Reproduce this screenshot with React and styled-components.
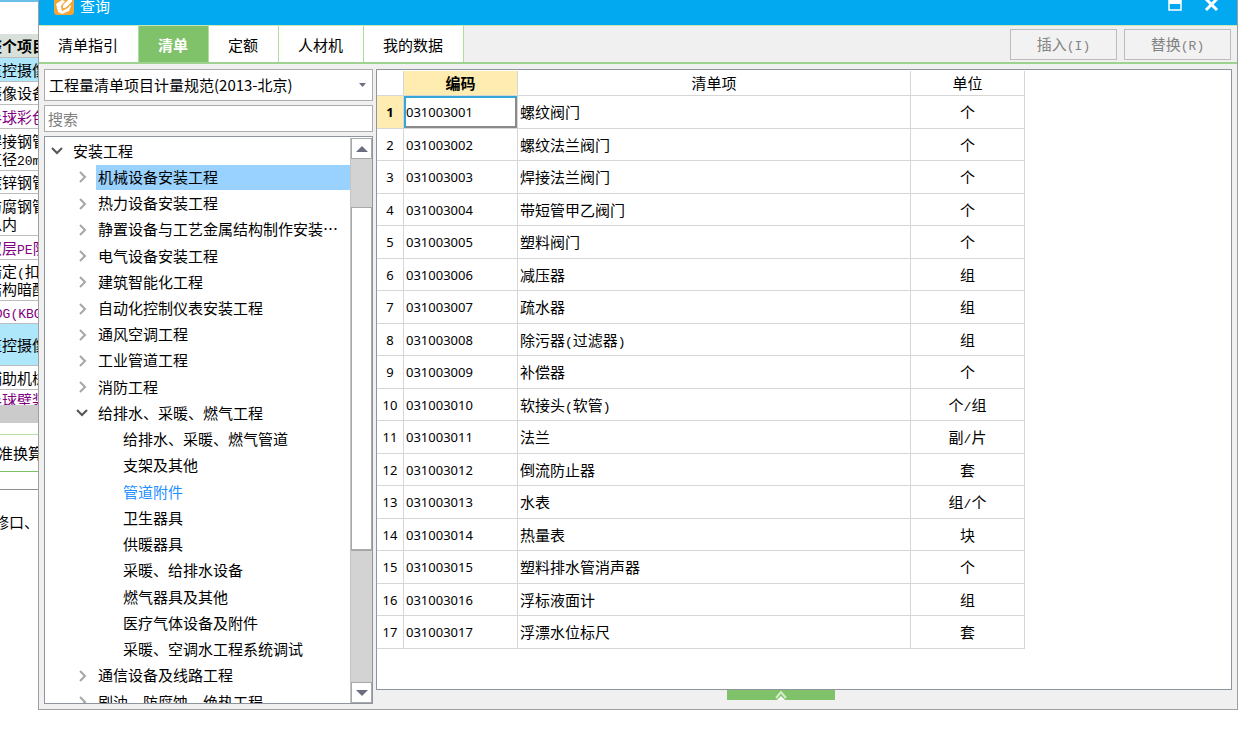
import React, { useState } from 'react'
import styled, { createGlobalStyle, css } from 'styled-components'

const GlobalStyle = createGlobalStyle`
  * {
    box-sizing: border-box;
  }

  body {
    margin: 0;
    background: white;
    color: black;
    overflow: hidden;
  }

  body, button, input, select {
    font-family: 'Noto Sans CJK SC', 'Noto Sans', sans-serif;
    font-size: 15px;
    line-height: 18px;
  }
`

const Desktop = styled.div`
  display: flex;
  height: 100vh;
  padding-bottom: 39px;
`

/* sheet that is mostly covered by the dialog */
const Behind = styled.aside`
  flex: 0 0 38px;
  overflow: hidden;
  white-space: nowrap;
`

const Sheet = styled.div`
  margin-left: -13px;
  padding-top: 32px;
  border-top: 2px solid #6bbfe8;
`

const SheetRow = styled.div`
  display: flex;
  flex-direction: column;
  justify-content: center;
  height: ${({ $height }) => $height}px;
  border-bottom: 1px solid #bdbdbd;
  background: ${({ $active }) => ($active ? '#aee6fa' : 'white')};
  color: ${({ $purple }) => ($purple ? '#800080' : 'black')};
  ${({ $head }) => $head && css`
    background: #d9e0da;
    font-weight: 700;
  `}
  ${({ $cut }) => $cut && css`
    justify-content: flex-start;
    padding-top: 1px;
    border-bottom: none;
    overflow: hidden;
  `}
`

const Line = styled.span`
  display: block;
  height: 18px;
`

/* half-width characters next to the 15px ideographs */
const Half = styled.span`
  font-family: 'Liberation Mono', monospace;
  font-size: 13px;
  line-height: 1;
`

const SheetScroll = styled.div`
  height: 18px;
  background: #cbcbcb;
`

const SubTab = styled.div`
  margin: 11px 0 0;
  margin-left: -4px;
  padding: 9px 0;
  border-top: 1px solid #b5dfa8;
  border-bottom: 1px solid #7cc268;
`

const SubText = styled.div`
  margin-top: 17px;
  padding: 23px 0 0 7px;
  border-top: 1px solid #909090;
`

const Dialog = styled.main`
  flex: 1;
  min-width: 0;
  display: flex;
  flex-direction: column;
  background: #f0f0f0;
  border: 1px solid #a0a0a0;
  border-top: none;
`

const TitleBar = styled.header`
  display: flex;
  align-items: center;
  flex: 0 0 38px;
  margin-top: -13px;
  padding: 0 17px 0 15px;
  background: #02a9f1;
  color: white;
`

const Title = styled.h1`
  flex: 1;
  margin: 0 0 0 6px;
  font-size: 15px;
  font-weight: 400;
`

const WindowButton = styled.button`
  display: flex;
  margin-left: 22px;
  padding: 0;
  border: none;
  background: none;
`

const Toolbar = styled.div`
  display: flex;
  align-items: center;
  justify-content: space-between;
  height: 39px;
  padding-right: 6px;
  border-top: 1px solid #c5eab8;
  border-bottom: 2px solid #9dd28f;
`

const Tabs = styled.nav`
  display: flex;
  align-self: stretch;
`

const Tab = styled.button`
  padding: 2px 21px 0 19px;
  border: none;
  box-shadow: inset -1px 0 #a9e09a;
  background: ${({ $active }) => ($active ? '#80c269' : 'white')};
  color: ${({ $active }) => ($active ? 'white' : 'black')};
  font-weight: ${({ $active }) => ($active ? 700 : 400)};
`

const Actions = styled.div`
  display: flex;
  gap: 7px;
`

const ActionButton = styled.button`
  width: 107px;
  height: 31px;
  border: 1px solid #bcbcbc;
  background: #f2f2f2;
  color: #838383;
`

const Body = styled.div`
  flex: 1;
  min-height: 0;
  display: flex;
  gap: 3px;
  padding: 5px;
`

const Side = styled.section`
  flex: 0 0 329px;
  display: flex;
  flex-direction: column;
  gap: 4px;
`

const SelectWrap = styled.div`
  position: relative;

  svg {
    position: absolute;
    right: 7px;
    top: 14px;
    pointer-events: none;
  }
`

const Select = styled.select`
  display: block;
  appearance: none;
  width: 100%;
  height: 32px;
  padding: 0 20px 0 4px;
  border: 1px solid #acacac;
  border-radius: 0;
  background: white;
  color: black;
`

const Search = styled.input`
  height: 27px;
  padding: 0 3px;
  border: 1px solid #acacac;
  background: white;

  &::placeholder {
    color: #808080;
  }
`

const TreeBox = styled.div`
  flex: 1;
  min-height: 0;
  display: flex;
  padding-top: 1px;
  border: 1px solid #8e959f;
  background: white;
`

const TreeClip = styled.div`
  flex: 1;
  overflow: hidden;
`

const Tree = styled.ul`
  display: flex;
  flex-direction: column;
  height: calc(100% + 12px);
  margin: 0;
  padding: 0;
  list-style: none;
`

const indent = [5, 30, 76]

const TreeRow = styled.li`
  flex: 1;
  display: flex;
  align-items: center;
  padding-left: ${({ $level }) => indent[$level]}px;
  white-space: nowrap;
`

const TreeLabel = styled.span`
  flex: 1;
  margin-left: ${({ $level }) => ($level === 1 ? 7 : 0)}px;
  padding: 3px 0 4px;
  padding-left: ${({ $level }) => [9, 2, 2][$level]}px;
  background: ${({ $selected }) => ($selected ? '#99d1ff' : 'none')};
  color: ${({ $current }) => ($current ? '#1e90ff' : 'inherit')};
`

const Chevron = styled.svg`
  flex: none;
  fill: none;
  stroke: ${({ $open }) => ($open ? '#555' : '#a6a6a6')};
  stroke-width: 2;
`

const ScrollBar = styled.div`
  flex: 0 0 22px;
  display: flex;
  flex-direction: column;
  background: #d3d3d3;
  border-left: 1px solid #c4c4c4;
`

const ScrollButton = styled.button`
  flex: 0 0 21px;
  display: flex;
  align-items: center;
  justify-content: center;
  padding: 0;
  border: 1px solid #a8a8a8;
  background: white;
`

const Track = styled.div`
  flex: ${({ $size }) => $size};
`

const Thumb = styled(Track)`
  border: 1px solid #a8a8a8;
  border-bottom-width: 2px;
  background: white;
`

const Content = styled.section`
  flex: 1;
  min-width: 0;
  display: flex;
  flex-direction: column;
  padding-bottom: 4px;
`

const GridBox = styled.div`
  flex: 1;
  min-height: 0;
  padding-top: 1px;
  border: 1px solid #8e959f;
  background: white;
  overflow: hidden;
`

const Grid = styled.table`
  table-layout: fixed;
  width: 648px;
  border-collapse: separate;
  border-spacing: 0;

  th, td {
    padding: 0 0 0 2px;
    border-right: 1px solid #d6d6d6;
    border-bottom: 1px solid #d6d6d6;
    font-weight: 400;
    text-align: left;
  }

  thead th {
    height: 25px;
    padding: 0;
    text-align: center;
  }

  tbody tr {
    height: 33px;
  }

  tbody tr:nth-child(even) {
    height: 32px;
  }

  thead th.picked, tbody th.picked {
    background: #ffecb0;
    font-weight: 700;
  }
`

const digits = css`
  && {
    font-family: 'Noto Sans', sans-serif;
    font-size: 13px;
  }
`

const RowNumber = styled.th`
  ${digits}
  && {
    padding: 0;
    text-align: center;
  }
`

const Code = styled.td`
  ${digits}
  ${({ $picked }) => $picked && css`
    box-shadow: inset 2px 2px #35a6d8, inset -2px -2px #8a8a8a;
  `}
`

const Unit = styled.td`
  && {
    padding: 0;
    text-align: center;
  }
`

const Handle = styled.button`
  display: flex;
  justify-content: center;
  width: 108px;
  height: 10px;
  margin-left: 41%;
  padding: 0;
  border: none;
  background: #80c269;
`

const tabs = ['清单指引', '清单', '定额', '人材机', '我的数据']

const tree = [
  { text: '安装工程', level: 0, open: true },
  { text: '机械设备安装工程', level: 1, selected: true },
  { text: '热力设备安装工程', level: 1 },
  { text: '静置设备与工艺金属结构制作安装…', level: 1 },
  { text: '电气设备安装工程', level: 1 },
  { text: '建筑智能化工程', level: 1 },
  { text: '自动化控制仪表安装工程', level: 1 },
  { text: '通风空调工程', level: 1 },
  { text: '工业管道工程', level: 1 },
  { text: '消防工程', level: 1 },
  { text: '给排水、采暖、燃气工程', level: 1, open: true },
  { text: '给排水、采暖、燃气管道', level: 2 },
  { text: '支架及其他', level: 2 },
  { text: '管道附件', level: 2, current: true },
  { text: '卫生器具', level: 2 },
  { text: '供暖器具', level: 2 },
  { text: '采暖、给排水设备', level: 2 },
  { text: '燃气器具及其他', level: 2 },
  { text: '医疗气体设备及附件', level: 2 },
  { text: '采暖、空调水工程系统调试', level: 2 },
  { text: '通信设备及线路工程', level: 1 },
  { text: '刷油、防腐蚀、绝热工程', level: 1 }
]

const items = [
  ['031003001', '螺纹阀门', '个'],
  ['031003002', '螺纹法兰阀门', '个'],
  ['031003003', '焊接法兰阀门', '个'],
  ['031003004', '带短管甲乙阀门', '个'],
  ['031003005', '塑料阀门', '个'],
  ['031003006', '减压器', '组'],
  ['031003007', '疏水器', '组'],
  ['031003008', '除污器(过滤器)', '组'],
  ['031003009', '补偿器', '个'],
  ['031003010', '软接头(软管)', '个/组'],
  ['031003011', '法兰', '副/片'],
  ['031003012', '倒流防止器', '套'],
  ['031003013', '水表', '组/个'],
  ['031003014', '热量表', '块'],
  ['031003015', '塑料排水管消声器', '个'],
  ['031003016', '浮标液面计', '组'],
  ['031003017', '浮漂水位标尺', '套']
]

const sheetRows = [
  { lines: ['整个项目'], height: 24, head: true },
  { lines: ['监控摄像'], height: 24, active: true },
  { lines: ['摄像设备'], height: 23 },
  { lines: ['半球彩色'], height: 24, purple: true },
  { lines: ['焊接钢管', '直径20mm'], height: 42 },
  { lines: ['镀锌钢管'], height: 23 },
  { lines: ['防腐钢管', '以内'], height: 42 },
  { lines: ['双层PE防'], height: 24, purple: true },
  { lines: ['暗定(扣', '结构暗配'], height: 41 },
  { lines: ['JDG(KBG'], height: 23, purple: true },
  { lines: ['监控摄像'], height: 42, active: true },
  { lines: ['辅助机械'], height: 24 },
  { lines: ['半球壁装'], height: 15, purple: true, cut: true }
]

const Mixed = ({ children }) => (
  <span>
    {children.split(/([\x21-\x7e]+)/).map((part, i) => (
      i % 2 ? <Half key={i}>{part}</Half> : part
    ))}
  </span>
)

const AppIcon = () => (
  <svg width="20" height="20" viewBox="0 0 20 20">
    <rect width="20" height="19" rx="3" fill="#f3a536" />
    <path d="M2 8l6-4 3 1-4 5 1 5 6-3 2-3 1 1-2 5-7 3-4-2z" fill="white" />
    <path d="M8 13l1-5 7-6 3 3-7 7z" fill="white" stroke="#f3a536" />
  </svg>
)

const Arrow = ({ up, width = 12, height = 6 }) => (
  <svg width={width} height={height} viewBox="0 0 12 6" preserveAspectRatio="none">
    <path d={up ? 'M0 6L6 0L12 6z' : 'M0 0L6 6L12 0z'} fill="#6b6e80" />
  </svg>
)

const TreeChevron = ({ open }) => (
  <Chevron $open={open} width="14" height="12" viewBox="0 0 14 12" aria-hidden="true">
    <path d={open ? 'M2 3l5 5 5-5' : 'M5 1l5 5-5 5'} />
  </Chevron>
)

const BackgroundSheet = () => (
  <Behind>
    <Sheet>
      {sheetRows.map(({ lines, height, head, active, purple, cut }, i) => (
        <SheetRow key={i} $height={height} $head={head} $active={active} $purple={purple} $cut={cut}>
          {lines.map(line => <Line key={line}><Mixed>{line}</Mixed></Line>)}
        </SheetRow>
      ))}
      <SheetScroll />
      <SubTab>标准换算</SubTab>
      <SubText>修口、</SubText>
    </Sheet>
  </Behind>
)

const ItemGrid = () => (
  <Grid>
    <colgroup>
      <col width="27" />
      <col width="114" />
      <col />
      <col width="114" />
    </colgroup>
    <thead>
      <tr>
        <th />
        <th className="picked">编码</th>
        <th>清单项</th>
        <th>单位</th>
      </tr>
    </thead>
    <tbody>
      {items.map(([code, name, unit], i) => (
        <tr key={code}>
          <RowNumber className={i === 0 ? 'picked' : undefined}>{i + 1}</RowNumber>
          <Code $picked={i === 0}>{code}</Code>
          <td><Mixed>{name}</Mixed></td>
          <Unit><Mixed>{unit}</Mixed></Unit>
        </tr>
      ))}
    </tbody>
  </Grid>
)

const App = () => {
  const [tab, setTab] = useState('清单')

  return (
    <Desktop>
      <GlobalStyle />
      <BackgroundSheet />
      <Dialog>
        <TitleBar>
          <AppIcon />
          <Title>查询</Title>
          <WindowButton aria-label="最大化">
            <svg width="14" height="14" viewBox="0 0 14 14">
              <path d="M1 1h12v10H1z" fill="none" stroke="white" strokeWidth="1.5" />
              <path d="M1 1h12v4H1z" fill="white" />
            </svg>
          </WindowButton>
          <WindowButton aria-label="关闭">
            <svg width="16" height="14" viewBox="0 0 16 14">
              <path d="M2 0l11 11M13 0L2 11" stroke="white" strokeWidth="3" />
            </svg>
          </WindowButton>
        </TitleBar>
        <Toolbar>
          <Tabs>
            {tabs.map(name => (
              <Tab key={name} $active={name === tab} onClick={() => setTab(name)}>{name}</Tab>
            ))}
          </Tabs>
          <Actions>
            <ActionButton disabled><Mixed>插入(I)</Mixed></ActionButton>
            <ActionButton disabled><Mixed>替换(R)</Mixed></ActionButton>
          </Actions>
        </Toolbar>
        <Body>
          <Side>
            <SelectWrap>
              <Select aria-label="计量规范">
                <option>工程量清单项目计量规范(2013-北京)</option>
              </Select>
              <Arrow width={7} height={4} />
            </SelectWrap>
            <Search type="text" placeholder="搜索" aria-label="搜索" />
            <TreeBox>
              <TreeClip>
                <Tree>
                  {tree.map(({ text, level, open, selected, current }) => (
                    <TreeRow key={text} $level={level}>
                      {level < 2 && <TreeChevron open={open} />}
                      <TreeLabel $level={level} $selected={selected} $current={current}>
                        {text}
                      </TreeLabel>
                    </TreeRow>
                  ))}
                </Tree>
              </TreeClip>
              <ScrollBar>
                <ScrollButton aria-label="向上"><Arrow up /></ScrollButton>
                <Track $size={48} />
                <Thumb $size={343} />
                <Track $size={132} />
                <ScrollButton aria-label="向下"><Arrow /></ScrollButton>
              </ScrollBar>
            </TreeBox>
          </Side>
          <Content>
            <GridBox>
              <ItemGrid />
            </GridBox>
            <Handle aria-label="展开">
              <svg width="12" height="10" viewBox="0 0 12 10">
                <path d="M1 8l5-6 5 6" fill="none" stroke="#d4edcb" strokeWidth="2" />
                <path d="M2 10l4-4 4 4z" fill="white" />
              </svg>
            </Handle>
          </Content>
        </Body>
      </Dialog>
    </Desktop>
  )
}

export default App
